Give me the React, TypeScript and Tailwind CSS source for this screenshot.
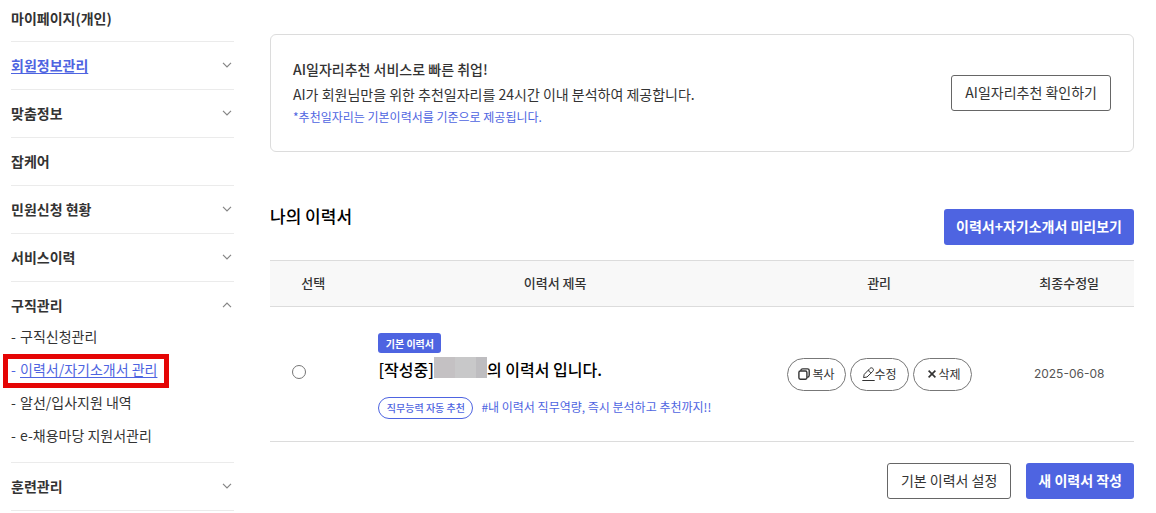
import React from "react";

type MenuEntry = { label: string; active?: boolean; expandable?: boolean };

const topMenu: MenuEntry[] = [
  { label: "회원정보관리", active: true, expandable: true },
  { label: "맞춤정보", expandable: true },
  { label: "잡케어" },
  { label: "민원신청 현황", expandable: true },
  { label: "서비스이력", expandable: true },
];

const jobMenu: MenuEntry[] = [
  { label: "구직신청관리" },
  { label: "이력서/자기소개서 관리", active: true },
  { label: "알선/입사지원 내역" },
  { label: "e-채용마당 지원서관리" },
];

function Chevron({ up = false }: { up?: boolean }) {
  return (
    <svg viewBox="0 0 10 6" className="mr-0.5 h-1.5 w-2.5" fill="none" stroke="#858585" strokeWidth="1.2" aria-hidden="true">
      <path d={up ? "M1 5.2 5 1.2 9 5.2" : "M1 0.8 5 4.8 9 0.8"} />
    </svg>
  );
}

function CopyIcon() {
  return (
    <svg viewBox="0 0 12 12" className="size-3" fill="none" stroke="#333" strokeWidth="1.4" aria-hidden="true">
      <rect x="0.9" y="3" width="8" height="8.2" rx="1.4" />
      <path d="M2.6 2.6C3 1.3 3.6 0.9 4.7 0.9H9.6C10.7 0.9 11.2 1.5 11.2 2.5V7.2C11.2 8.5 10.6 9.1 9.2 9.4" />
    </svg>
  );
}

function PenIcon() {
  return (
    <svg viewBox="0 0 13 14" className="h-3.5 w-[13px]" fill="none" stroke="#333" strokeWidth="1" strokeLinejoin="round" aria-hidden="true">
      <path d="M1.6 10.6 2.2 7.4 7.9 1.5C8.8 0.6 10 0.6 10.8 1.4 11.7 2.2 11.6 3.4 10.8 4.3L5 10 1.6 10.6Z" />
      <path d="M6.6 2.9C6.9 4.7 7.7 5.5 9.4 5.6" />
      <path d="M0.3 13.5H12.7" />
    </svg>
  );
}

function CloseIcon() {
  return (
    <svg viewBox="0 0 8 8" className="size-2" fill="none" stroke="#333" strokeWidth="1.6" aria-hidden="true">
      <path d="M0.6 0.6 7.4 7.4M7.4 0.6 0.6 7.4" />
    </svg>
  );
}

function MenuRow({ label, active, expandable }: MenuEntry) {
  return (
    <li className="flex h-12 items-center justify-between border-b border-[#ebebeb] pb-0.5">
      <a
        href="#"
        className={
          active
            ? "text-sm font-bold text-[#4e64e1] underline underline-offset-2"
            : "text-sm font-bold text-[#333]"
        }
      >
        {label}
      </a>
      {expandable && <Chevron />}
    </li>
  );
}

function Sidebar() {
  return (
    <nav aria-label="마이페이지" className="w-[223px] shrink-0">
      <h2 className="flex h-[42px] items-center border-b border-[#ebebeb] pb-1.5 text-sm font-bold text-[#333]">
        마이페이지(개인)
      </h2>
      <ul>
        {topMenu.map((entry) => (
          <MenuRow key={entry.label} {...entry} />
        ))}
        <li className="border-b border-[#ebebeb] pb-[11px]">
          <div className="flex h-[37px] items-center justify-between pt-2">
            <a href="#" className="text-sm font-bold text-[#333]">
              구직관리
            </a>
            <Chevron up />
          </div>
          <ul>
            {jobMenu.map(({ label, active }) => (
              <li key={label} className="relative flex h-[33px] items-center text-sm text-[#333]">
                <span className={active ? "w-[9px] text-[#4e64e1]" : "w-[9px]"}>-</span>
                <a href="#" className={active ? "text-[#4e64e1] underline underline-offset-2" : ""}>
                  {label}
                </a>
                {active && (
                  <span
                    aria-hidden="true"
                    className="pointer-events-none absolute -left-2 top-0.5 h-[34px] w-[166px] border-[5px] border-[#e50505]"
                  />
                )}
              </li>
            ))}
          </ul>
        </li>
        <MenuRow label="훈련관리" expandable />
      </ul>
    </nav>
  );
}

const outlineButton =
  "flex h-9 items-center rounded-[3px] border border-[#666] bg-white px-[13px] pb-0.5 text-sm text-[#333]";
const primaryButton =
  "flex h-9 items-center rounded-[3px] bg-[#4e64e1] px-3 pb-0.5 text-sm font-bold text-white";
const pillButton =
  "flex h-[33px] w-[59px] items-center justify-center rounded-full border border-[#777] bg-white text-xs text-[#333]";

function MaskedName() {
  return (
    <span aria-hidden="true" className="flex h-[21px] w-[53px]">
      <span className="w-[21px] bg-[#c4c1c3]" />
      <span className="w-[21px] bg-[#c8c8c9]" />
      <span className="w-[11px] bg-[#bebdc0]" />
    </span>
  );
}

function ResumeTable() {
  return (
    <table className="mt-[15px] w-full table-fixed border-collapse border-y border-[#dcdcdc]">
      <colgroup>
        <col className="w-[10%]" />
        <col className="w-[46%]" />
        <col className="w-[29%]" />
        <col className="w-[15%]" />
      </colgroup>
      <thead>
        <tr className="h-[46px] border-b border-[#dcdcdc] bg-[#f8f8f8] text-[13px] text-[#333]">
          <th scope="col" className="pb-0.5 font-medium">선택</th>
          <th scope="col" className="pb-0.5 font-medium">이력서 제목</th>
          <th scope="col" className="pb-0.5 font-medium">관리</th>
          <th scope="col" className="pb-0.5 font-medium">최종수정일</th>
        </tr>
      </thead>
      <tbody>
        <tr className="h-[135px]">
          <td className="pb-1 pl-[22px]">
            <input
              type="radio"
              name="resume"
              aria-label="이력서 선택"
              className="block size-3.5 appearance-none rounded-full border border-[#767676] bg-white checked:border-4 checked:border-[#4e64e1]"
            />
          </td>
          <td className="pl-[22px] pt-1">
            <span className="flex h-5 w-[63px] items-center justify-center rounded-[3px] bg-[#4e64e1] text-[10px] font-bold text-white">
              기본 이력서
            </span>
            <a href="#" className="mt-1 flex h-[26px] text-base font-medium leading-6 text-black">
              [작성중]
              <MaskedName />
              <span>의 이력서 입니다.</span>
            </a>
            <div className="mt-3.5 flex gap-2 text-[#4e64e1]">
              <button
                type="button"
                className="flex h-[22px] w-[95px] items-center justify-center rounded-full border border-[#4e64e1] pb-px text-[10px] font-medium"
              >
                직무능력 자동 추천
              </button>
              <span className="text-xs leading-5">#내 이력서 직무역량, 즉시 분석하고 추천까지!!</span>
            </div>
          </td>
          <td>
            <div className="flex justify-center gap-1">
              <button type="button" className={pillButton + " gap-[3px]"}>
                <CopyIcon />
                복사
              </button>
              <button type="button" className={pillButton}>
                <PenIcon />
                수정
              </button>
              <button type="button" className={pillButton + " gap-[3px] pl-1"}>
                <CloseIcon />
                삭제
              </button>
            </div>
          </td>
          <td className="text-center font-['Inter','Noto_Sans_CJK_KR',sans-serif] text-xs text-[#555]">2025-06-08</td>
        </tr>
      </tbody>
    </table>
  );
}

export default function App() {
  return (
    <div className="flex gap-9 bg-white pl-[11px] pr-[22px] font-['Noto_Sans_CJK_KR',sans-serif]">
      <Sidebar />
      <main className="min-w-0 flex-1 pt-[34px]">
        <section className="flex h-[118px] items-center justify-between rounded-md border border-[#dcdcdc] px-[22px]">
          <div className="pb-0.5 text-sm text-[#333]">
            <p className="font-medium leading-6">AI일자리추천 서비스로 빠른 취업!</p>
            <p className="leading-[26px]">AI가 회원님만을 위한 추천일자리를 24시간 이내 분석하여 제공합니다.</p>
            <p className="text-xs leading-5 text-[#4e64e1]">*추천일자리는 기본이력서를 기준으로 제공됩니다.</p>
          </div>
          <button type="button" className={outlineButton}>AI일자리추천 확인하기</button>
        </section>

        <section className="mt-[52px]">
          <div className="flex justify-between">
            <h1 className="text-[17px] font-medium leading-6 text-black">나의 이력서</h1>
            <button type="button" className={primaryButton + " mt-[5px]"}>이력서+자기소개서 미리보기</button>
          </div>
          <ResumeTable />
          <div className="mt-[21px] flex justify-end gap-[15px]">
            <button type="button" className={outlineButton}>기본 이력서 설정</button>
            <button type="button" className={primaryButton}>새 이력서 작성</button>
          </div>
        </section>
      </main>
    </div>
  );
}
